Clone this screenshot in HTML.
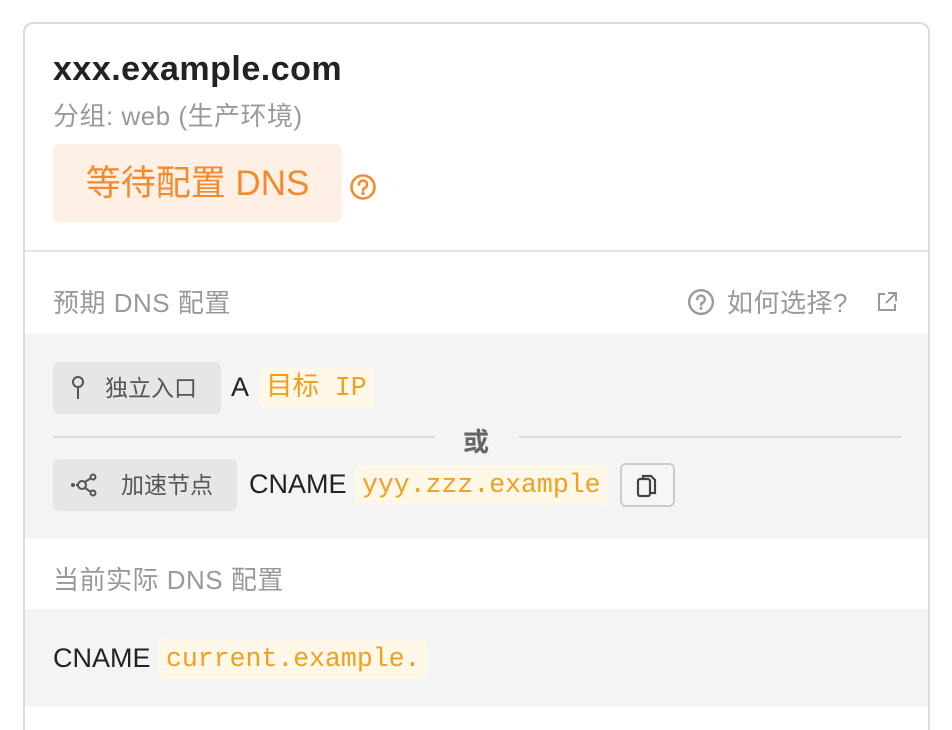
<!DOCTYPE html>
<html style="height:730px;overflow:hidden"><head><meta charset="utf-8"><style>
*{margin:0;padding:0;box-sizing:border-box}
body{width:952px;height:730px;background:#fff;position:relative;overflow:hidden;font-family:"Liberation Sans","Noto Sans CJK SC",sans-serif}
.card{position:absolute;left:23px;top:22px;width:907px;height:708px;border:2px solid #dcdcdc;border-bottom:none;border-radius:10px 10px 0 0;overflow:hidden;background:#fff}
.a{position:absolute;white-space:nowrap}
.mono{font-family:"Liberation Mono","Noto Sans CJK SC",monospace}
.code{background:#fff8e8;color:#f0a020;border-radius:6px;height:40px;line-height:40px;padding:0 7px;font-size:26.5px}
.tag{background:#e6e6e6;border-radius:6px;color:#555;font-size:23px;height:52px;line-height:52px}
.lbl{font-size:26px;color:#999;letter-spacing:0.5px}
</style></head><body>
<div class="card">
  <div class="a" style="left:28px;top:26px;font-size:34px;font-weight:bold;color:#222;letter-spacing:0.5px">xxx.example.com</div>
  <div class="a" style="left:28px;top:72px;font-size:26px;color:#999;letter-spacing:0.5px">分组: web (生产环境)</div>
  <div class="a" style="left:28px;top:120px;width:289px;height:78px;background:#fff0e6;border-radius:6px;color:#f58a2c;font-size:35px;line-height:80px;text-align:center">等待配置 DNS</div>
  <svg class="a" style="left:324px;top:149px" width="28" height="28" viewBox="0 0 28 28"><circle cx="14" cy="14" r="11.5" fill="none" stroke="#f58a2c" stroke-width="2.6"/><path d="M10 11.5a4 4 0 1 1 5.5 3.7c-1 .5-1.5 1.1-1.5 2.3" fill="none" stroke="#f58a2c" stroke-width="2.6" stroke-linecap="round"/><circle cx="14" cy="20.5" r="1.6" fill="#f58a2c"/></svg>
  <div class="a" style="left:0;top:226px;width:100%;height:2px;background:#e4e4e4"></div>
  <div class="a lbl" style="left:28px;top:259px">预期 DNS 配置</div>
  <svg class="a" style="left:662px;top:264px" width="28" height="28" viewBox="0 0 26 26"><circle cx="13" cy="13" r="11" fill="none" stroke="#999" stroke-width="2.2"/><path d="M9.5 10.5a3.5 3.5 0 1 1 4.8 3.3c-.9.4-1.3 1-1.3 2" fill="none" stroke="#999" stroke-width="2.2" stroke-linecap="round"/><circle cx="13" cy="18.8" r="1.4" fill="#999"/></svg>
  <div class="a lbl" style="left:702px;top:259px">如何选择?</div>
  <svg class="a" style="left:850px;top:266px" width="24" height="24" viewBox="0 0 24 24" fill="none" stroke="#999" stroke-width="2"><path d="M10 4H4v16h16v-6"/><path d="M13 3h8v8M21 3L11 13"/></svg>
  <div class="a" style="left:0;top:310px;width:100%;height:205px;background:#f4f4f4"></div>
  <div class="a tag" style="left:28px;top:338px;width:168px"><svg style="position:absolute;left:18px;top:13px" width="14" height="26" viewBox="0 0 14 26" fill="none" stroke="#555" stroke-width="2"><circle cx="7" cy="7" r="5"/><path d="M7 12v12"/></svg><span style="position:absolute;left:52px">独立入口</span></div>
  <div class="a" style="left:206px;top:348px;font-size:27px;color:#222">A</div>
  <div class="a code mono" style="left:234px;top:344px">目标 IP</div>
  <div class="a" style="left:28px;top:412px;width:382px;height:2px;background:#ddd"></div>
  <div class="a" style="left:494px;top:412px;width:382px;height:2px;background:#ddd"></div>
  <div class="a" style="left:438px;top:398px;font-size:26px;font-weight:bold;color:#666">或</div>
  <div class="a tag" style="left:28px;top:435px;width:184px"><svg style="position:absolute;left:16px;top:13px" width="30" height="26" viewBox="0 0 30 26" fill="#555" stroke="#555" stroke-width="2"><circle cx="4" cy="13" r="2" stroke="none"/><circle cx="13" cy="13" r="4" fill="none"/><circle cx="24" cy="5" r="2.5" fill="none"/><circle cx="24" cy="21" r="2.5" fill="none"/><path d="M16 10l6-4M16 16l6 4M7 13h2" fill="none"/></svg><span style="position:absolute;left:68px">加速节点</span></div>
  <div class="a" style="left:224px;top:445px;font-size:27px;color:#222">CNAME</div>
  <div class="a code mono" style="left:330px;top:441px">yyy.zzz.example</div>
  <div class="a" style="left:595px;top:439px;width:55px;height:44px;border:2px solid #ccc;border-radius:6px;background:#f6f6f6"><svg style="position:absolute;left:13px;top:7px" width="24" height="28" viewBox="0 0 24 28" fill="none" stroke="#444" stroke-width="2.2"><rect x="3" y="7" width="12" height="17" rx="2"/><path d="M8 7V4h8l4 4v13h-5"/></svg></div>
  <div class="a lbl" style="left:28px;top:536px">当前实际 DNS 配置</div>
  <div class="a" style="left:0;top:585px;width:100%;height:98px;background:#f4f4f4"></div>
  <div class="a" style="left:28px;top:619px;font-size:27px;color:#222">CNAME</div>
  <div class="a code mono" style="left:134px;top:615px">current.example.</div>
</div>
</body></html>
